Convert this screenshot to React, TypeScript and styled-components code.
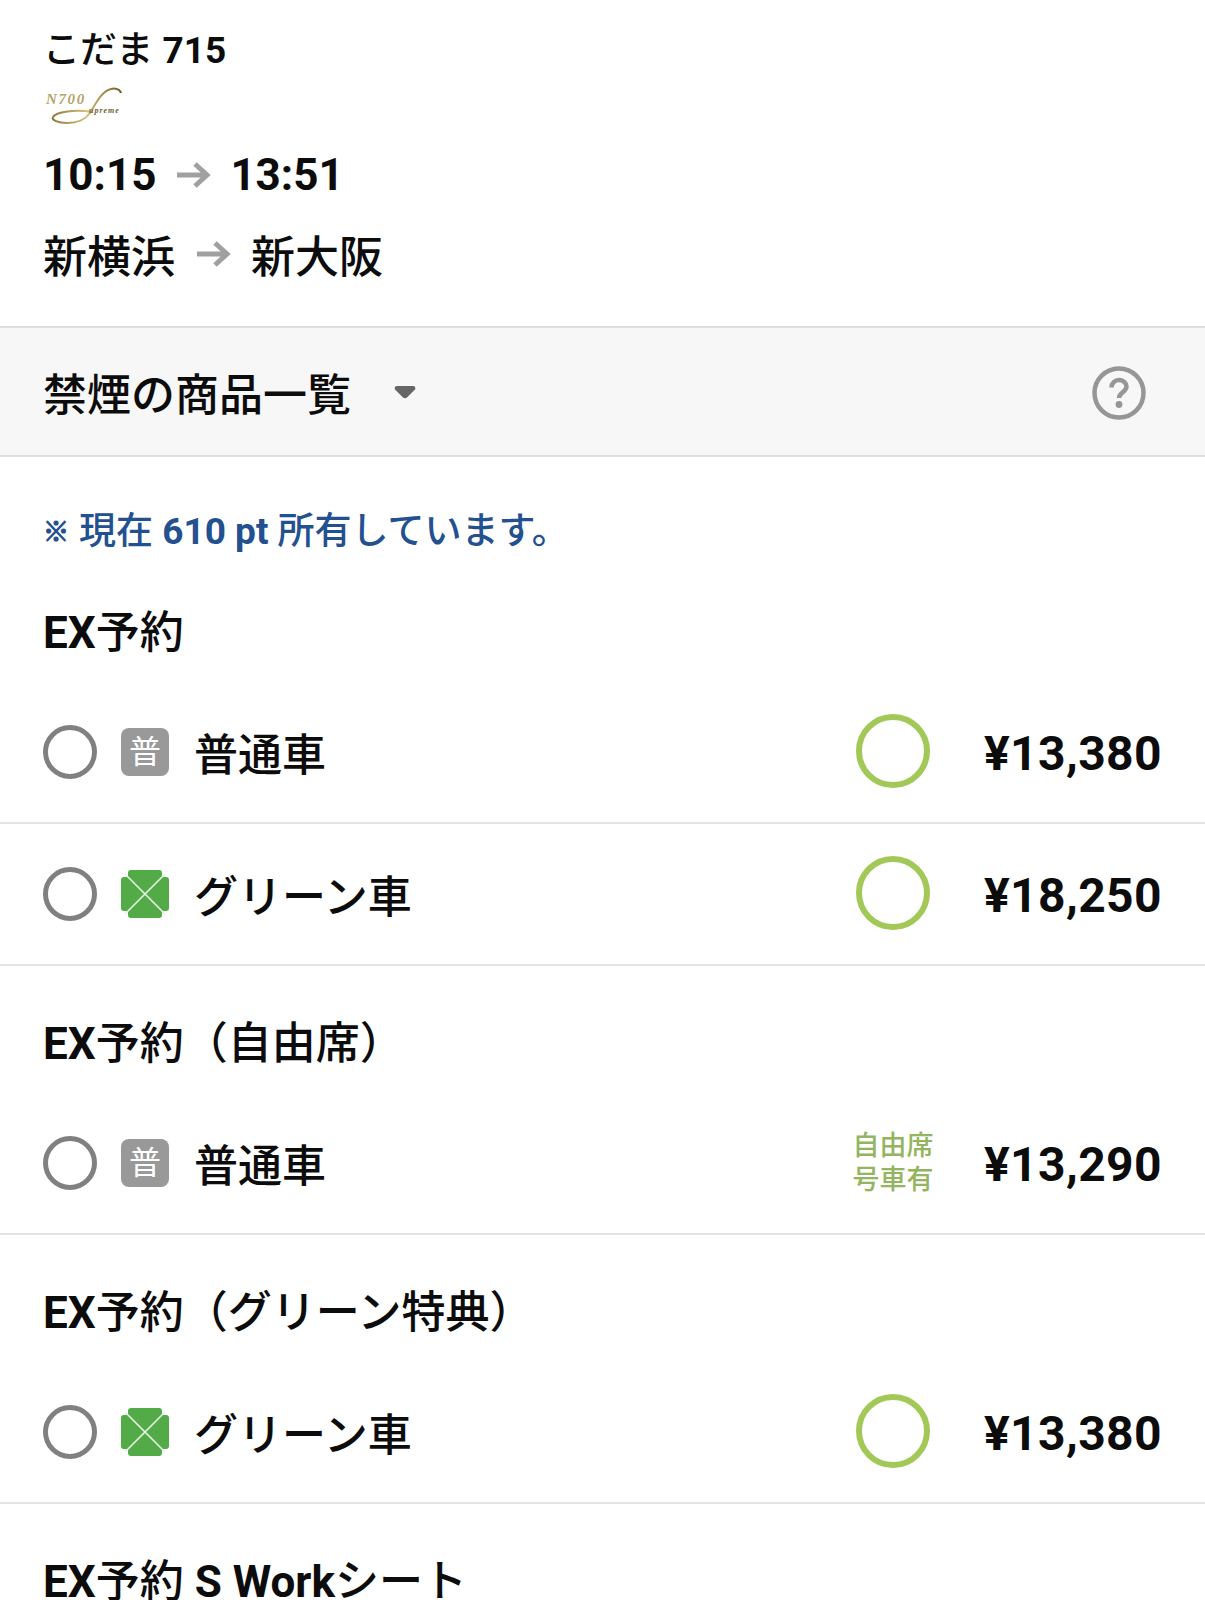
import React from 'react';
import styled, { createGlobalStyle } from 'styled-components';

const GlobalStyle = createGlobalStyle`
  html, body {
    margin: 0;
    padding: 0;
    background: #fff;
  }
  body {
    font-family: Roboto, "Noto Sans CJK JP", sans-serif;
    color: #0c0c0c;
  }
`;

const Page = styled.div`
  width: 1205px;
  height: 1600px;
  overflow: hidden;
  background: #fff;
`;

const Header = styled.header`
  height: 328px;
  box-sizing: border-box;
  padding: 27px 44px 0 43px;
  border-bottom: 2px solid #dedede;
`;

const TrainName = styled.div`
  font-size: 37px;
  line-height: 48px;
  font-weight: 500;
`;

const Latin = styled.span`
  font-weight: 700;
`;

const TrainLogo = styled.svg`
  display: block;
  width: 82px;
  height: 40px;
  margin-top: 12px;
`;

const RouteRow = styled.div<{ $top: number; $weight: number; $gap: number }>`
  display: flex;
  align-items: center;
  gap: ${p => p.$gap}px;
  font-size: 44px;
  line-height: 56px;
  font-weight: ${p => p.$weight};
  margin-top: ${p => p.$top}px;
`;

const ArrowIcon = styled.svg<{ $lift: number }>`
  width: 36px;
  height: 30px;
  flex: none;
  transform: translateY(${p => -p.$lift}px);
`;

const Band = styled.div`
  height: 129px;
  box-sizing: border-box;
  display: flex;
  align-items: center;
  padding: 0 58px 0 43px;
  background: #f7f7f7;
  border-bottom: 2px solid #dedede;
`;

const BandTitle = styled.div`
  font-size: 44px;
  font-weight: 500;
`;

const CaretIcon = styled.svg`
  width: 22px;
  height: 14px;
  margin: 0 0 0 43px;
`;

const HelpIcon = styled.svg`
  width: 56px;
  height: 56px;
  margin: 2px 0 0 auto;
`;

const Points = styled.p`
  display: flex;
  align-items: center;
  margin: 0;
  padding: 50px 44px 0 43px;
  font-size: 37px;
  line-height: 50px;
  font-weight: 500;
  color: #23508f;
  white-space: pre;
`;

const PointsMark = styled.span`
  width: 36px;
  font-size: 26px;
  font-weight: 700;
  -webkit-text-stroke: 1.2px #23508f;
`;

const SectionTitle = styled.h2<{ $top: number }>`
  margin: ${p => p.$top}px 0 0;
  padding: 0 43px;
  font-size: 44px;
  line-height: 60px;
  font-weight: 500;
`;

const Row = styled.div<{ $top: number }>`
  display: flex;
  align-items: center;
  height: 142px;
  margin-top: ${p => p.$top}px;
  padding: 0 43px;
  box-sizing: border-box;
  border-bottom: 2px solid #e4e4e4;
`;

const Radio = styled.span`
  width: 54px;
  height: 54px;
  box-sizing: border-box;
  border: 5px solid #808080;
  border-radius: 50%;
  flex: none;
`;

const CarBadge = styled.span`
  width: 48px;
  height: 48px;
  margin-left: 24px;
  border-radius: 8px;
  background: #999;
  color: #fff;
  font-size: 32px;
  line-height: 48px;
  text-align: center;
  flex: none;
`;

const CloverIcon = styled.svg`
  width: 48px;
  height: 48px;
  margin-left: 24px;
  flex: none;
`;

const CarName = styled.span`
  margin-left: 25px;
  font-size: 44px;
  font-weight: 500;
`;

const Availability = styled.div`
  width: 100px;
  margin-left: auto;
  display: flex;
  justify-content: center;
`;

const Ring = styled.span`
  width: 74px;
  height: 74px;
  box-sizing: border-box;
  border: 6px solid #a2c957;
  border-radius: 50%;
  margin: -2px 0 0 5px;
`;

const FreeSeat = styled.div`
  font-size: 27px;
  line-height: 34px;
  font-weight: 500;
  color: #94b560;
  text-align: center;
  margin-left: 6px;
`;

const Price = styled.span`
  width: 200px;
  margin: 3px 0 0 22px;
  text-align: right;
  font-size: 48px;
  font-weight: 700;
  letter-spacing: 0.4px;
`;

const Arrow = ({ lift = 0 }: { lift?: number }) => (
  <ArrowIcon viewBox="0 0 36 30" $lift={lift}>
    <path d="M2 15H31M20 4l12 11-12 11" fill="none" stroke="#a0a0a0" strokeWidth="5" />
  </ArrowIcon>
);

const Clover = () => (
  <CloverIcon viewBox="0 0 48 48">
    <path
      d="M10 0h28a3 3 0 0 1 3 3v4h4a3 3 0 0 1 3 3v28a3 3 0 0 1-3 3h-4v4a3 3 0 0 1-3 3H10a3 3 0 0 1-3-3v-4H3a3 3 0 0 1-3-3V10a3 3 0 0 1 3-3h4V3a3 3 0 0 1 3-3z"
      fill="#52ab47"
    />
    <path d="M4 4l40 40M44 4L4 44" stroke="#e8f4e4" strokeWidth="1.7" />
  </CloverIcon>
);

const Logo = () => (
  <TrainLogo viewBox="0 0 82 40">
    <defs>
      <linearGradient id="gold" x1="0" x2="1">
        <stop offset="0" stopColor="#8d7a3a" />
        <stop offset="0.5" stopColor="#d3c07a" />
        <stop offset="1" stopColor="#6d5c22" />
      </linearGradient>
    </defs>
    <path
      d="M78 6c-1-4-6-5-10-4-9 2-15 14-21 24-5 7-12 10-23 10-9 0-16-3-14-6 3-5 22-8 39-5"
      fill="none"
      stroke="url(#gold)"
      strokeWidth="2"
    />
    <text x="3" y="17" fontFamily="Liberation Serif" fontStyle="italic" fontWeight="700" fontSize="15" fill="#b3a468" letterSpacing="1.6">
      N700
    </text>
    <text x="46" y="26" fontFamily="Liberation Serif" fontStyle="italic" fontWeight="700" fontSize="8" fill="#6f6237" letterSpacing="1">
      upreme
    </text>
  </TrainLogo>
);

const Help = () => (
  <HelpIcon viewBox="0 0 56 56">
    <circle cx="28" cy="28" r="24.5" fill="none" stroke="#969696" strokeWidth="4.5" />
    <path d="M20.5 22.5c0-4.500 3.500-7.500 7.500-7.500s7.500 3 7.500 6.500c0 5.500-7.500 6-7.500 11.500" fill="none" stroke="#969696" strokeWidth="4.5" />
    <circle cx="28" cy="39.5" r="3.4" fill="#969696" />
  </HelpIcon>
);

const Caret = () => (
  <CaretIcon viewBox="0 0 22 14">
    <path d="M3 1h16c2 0 3 2 2 3.500l-8 8c-1 1-3 1-4 0l-8-8C0 3 1 1 3 1z" fill="#666" />
  </CaretIcon>
);

type Product = { car: 'normal' | 'green'; price: string; free?: boolean };

const ProductRow = ({ product, top }: { product: Product; top: number }) => (
  <Row $top={top}>
    <Radio />
    {product.car === 'normal' ? <CarBadge>普</CarBadge> : <Clover />}
    <CarName>{product.car === 'normal' ? '普通車' : 'グリーン車'}</CarName>
    <Availability>
      {product.free ? (
        <FreeSeat>
          自由席
          <br />
          号車有
        </FreeSeat>
      ) : (
        <Ring />
      )}
    </Availability>
    <Price>{product.price}</Price>
  </Row>
);

export default function App() {
  return (
    <Page>
      <GlobalStyle />
      <Header>
        <TrainName>
          こだま <Latin>715</Latin>
        </TrainName>
        <Logo />
        <RouteRow $top={20} $weight={700} $gap={19}>
          <span>10:15</span>
          <Arrow />
          <span>13:51</span>
        </RouteRow>
        <RouteRow $top={27} $weight={500} $gap={20}>
          <span>新横浜</span>
          <Arrow lift={4} />
          <span>新大阪</span>
        </RouteRow>
      </Header>
      <Band>
        <BandTitle>禁煙の商品一覧</BandTitle>
        <Caret />
        <Help />
      </Band>
      <Points>
        <PointsMark>※</PointsMark>
        <span>
          現在 <Latin>610 pt</Latin> 所有しています。
        </span>
      </Points>
      <SectionTitle $top={46}>
        <Latin>EX</Latin>予約
      </SectionTitle>
      <ProductRow top={19} product={{ car: 'normal', price: '¥13,380' }} />
      <ProductRow top={0} product={{ car: 'green', price: '¥18,250' }} />
      <SectionTitle $top={48}>
        <Latin>EX</Latin>予約（自由席）
      </SectionTitle>
      <ProductRow top={19} product={{ car: 'normal', price: '¥13,290', free: true }} />
      <SectionTitle $top={48}>
        <Latin>EX</Latin>予約（グリーン特典）
      </SectionTitle>
      <ProductRow top={19} product={{ car: 'green', price: '¥13,380' }} />
      <SectionTitle $top={48}>
        <Latin>EX</Latin>予約 <Latin>S Work</Latin>シート
      </SectionTitle>
    </Page>
  );
}
